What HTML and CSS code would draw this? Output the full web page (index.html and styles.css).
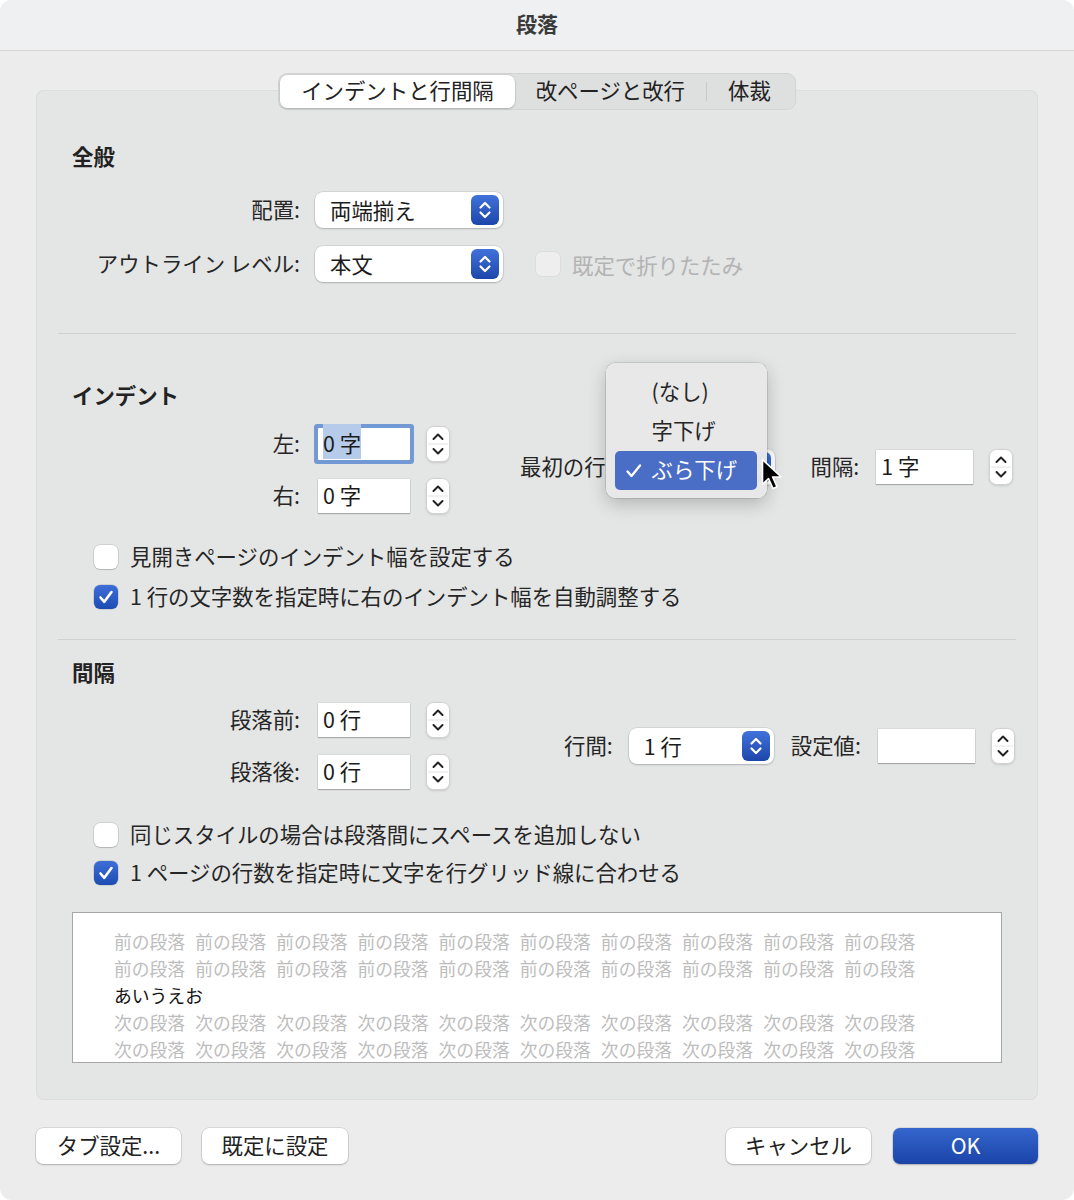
FILE: index.html
```html
<!DOCTYPE html>
<html lang="ja">
<head>
  <meta charset="UTF-8" />
  <title>段落</title>
  <link rel="stylesheet" href="styles.css">
</head>
<body>
<div class="window">
  <header class="titlebar">段落</header>

  <main class="content">
    <nav class="tabs">
      <span class="tab active">インデントと行間隔</span>
      <span class="tab">改ページと改行</span>
      <span class="tab divided">体裁</span>
    </nav>

    <section class="panel">
      <!-- 全般 -->
      <h2>全般</h2>
      <div class="general-grid">
        <span class="lbl">配置:</span>
        <div class="popup">両端揃え<span class="popup-arrows"><svg width="28" height="30" viewBox="0 0 28 30"><path d="M9.5 12.5l4.5-4.5 4.5 4.5M9.5 17.5l4.5 4.5 4.5-4.5" stroke="#fff" stroke-width="2.2" fill="none" stroke-linecap="round" stroke-linejoin="round"/></svg></span></div>
        <span></span>

        <span class="lbl">アウトライン レベル:</span>
        <div class="popup">本文<span class="popup-arrows"><svg width="28" height="30" viewBox="0 0 28 30"><path d="M9.5 12.5l4.5-4.5 4.5 4.5M9.5 17.5l4.5 4.5 4.5-4.5" stroke="#fff" stroke-width="2.2" fill="none" stroke-linecap="round" stroke-linejoin="round"/></svg></span></div>
        <label class="check-inline disabled"><span class="box"></span>既定で折りたたみ</label>
      </div>

      <div class="rule rule-1"></div>

      <!-- インデント -->
      <h2 class="indent-head">インデント</h2>
      <div class="field-block">
        <div class="field-grid">
          <span class="lbl">左:</span>
          <div class="field focused"><span class="sel">0 字</span></div>
          <svg class="stepper" width="24" height="36" viewBox="0 0 24 36"><rect x=".5" y=".5" width="23" height="35" rx="7" fill="#fff" stroke="#d0d0d0"/><path d="M2 18h20" stroke="#e4e4e4"/><path d="M7.5 13l4.5-4.5 4.5 4.5M7.5 23l4.5 4.5 4.5-4.5" stroke="#222" stroke-width="2" fill="none" stroke-linecap="round" stroke-linejoin="round"/></svg>

          <span class="lbl">右:</span>
          <div class="field">0 字</div>
          <svg class="stepper" width="24" height="36" viewBox="0 0 24 36"><rect x=".5" y=".5" width="23" height="35" rx="7" fill="#fff" stroke="#d0d0d0"/><path d="M2 18h20" stroke="#e4e4e4"/><path d="M7.5 13l4.5-4.5 4.5 4.5M7.5 23l4.5 4.5 4.5-4.5" stroke="#222" stroke-width="2" fill="none" stroke-linecap="round" stroke-linejoin="round"/></svg>
        </div>

        <div class="side-group first-line">
          <span class="side-lbl">最初の行</span>
          <div class="popup-wrap">
            <!-- the open menu covers the popup's label -->
            <div class="popup popup-first"><span class="popup-arrows"><svg width="28" height="30" viewBox="0 0 28 30"><path d="M9.5 12.5l4.5-4.5 4.5 4.5M9.5 17.5l4.5 4.5 4.5-4.5" stroke="#fff" stroke-width="2.2" fill="none" stroke-linecap="round" stroke-linejoin="round"/></svg></span></div>
            <ul class="menu">
              <li>(なし)</li>
              <li>字下げ</li>
              <li class="current"><svg class="tick" width="18" height="18" viewBox="0 0 18 18"><path d="M2.5 9.5l4 4.5L15 3.5" stroke="#fff" stroke-width="2.3" fill="none" stroke-linecap="round" stroke-linejoin="round"/></svg>ぶら下げ</li>
            </ul>
            <svg class="cursor" width="22" height="34" viewBox="0 0 22 34"><path d="M1.5 1.5v25l6-6 4.5 10 4-1.8-4.4-9.7h8.6z" fill="#000" stroke="#fff" stroke-width="1.6" stroke-linejoin="round"/></svg>
          </div>
          <span class="side-lbl gap-lbl">間隔:</span>
          <div class="field wide">1 字</div>
          <svg class="stepper" width="24" height="36" viewBox="0 0 24 36"><rect x=".5" y=".5" width="23" height="35" rx="7" fill="#fff" stroke="#d0d0d0"/><path d="M2 18h20" stroke="#e4e4e4"/><path d="M7.5 13l4.5-4.5 4.5 4.5M7.5 23l4.5 4.5 4.5-4.5" stroke="#222" stroke-width="2" fill="none" stroke-linecap="round" stroke-linejoin="round"/></svg>
        </div>
      </div>

      <label class="check-row cr-1"><span class="box"></span>見開きページのインデント幅を設定する</label>
      <label class="check-row cr-2"><span class="box checked"><svg width="24" height="24" viewBox="0 0 24 24"><path d="M6.5 12.5l3.8 4.3L17.5 7" stroke="#fff" stroke-width="2.6" fill="none" stroke-linecap="round" stroke-linejoin="round"/></svg></span>1 行の文字数を指定時に右のインデント幅を自動調整する</label>

      <div class="rule rule-2"></div>

      <!-- 間隔 -->
      <h2 class="spacing-head">間隔</h2>
      <div class="field-block spacing-block">
        <div class="field-grid">
          <span class="lbl">段落前:</span>
          <div class="field">0 行</div>
          <svg class="stepper" width="24" height="36" viewBox="0 0 24 36"><rect x=".5" y=".5" width="23" height="35" rx="7" fill="#fff" stroke="#d0d0d0"/><path d="M2 18h20" stroke="#e4e4e4"/><path d="M7.5 13l4.5-4.5 4.5 4.5M7.5 23l4.5 4.5 4.5-4.5" stroke="#222" stroke-width="2" fill="none" stroke-linecap="round" stroke-linejoin="round"/></svg>

          <span class="lbl">段落後:</span>
          <div class="field">0 行</div>
          <svg class="stepper" width="24" height="36" viewBox="0 0 24 36"><rect x=".5" y=".5" width="23" height="35" rx="7" fill="#fff" stroke="#d0d0d0"/><path d="M2 18h20" stroke="#e4e4e4"/><path d="M7.5 13l4.5-4.5 4.5 4.5M7.5 23l4.5 4.5 4.5-4.5" stroke="#222" stroke-width="2" fill="none" stroke-linecap="round" stroke-linejoin="round"/></svg>
        </div>

        <div class="side-group line-spacing">
          <span class="side-lbl">行間:</span>
          <div class="popup popup-line">1 行<span class="popup-arrows"><svg width="28" height="30" viewBox="0 0 28 30"><path d="M9.5 12.5l4.5-4.5 4.5 4.5M9.5 17.5l4.5 4.5 4.5-4.5" stroke="#fff" stroke-width="2.2" fill="none" stroke-linecap="round" stroke-linejoin="round"/></svg></span></div>
          <span class="side-lbl gap-lbl">設定値:</span>
          <div class="field wide"></div>
          <svg class="stepper" width="24" height="36" viewBox="0 0 24 36"><rect x=".5" y=".5" width="23" height="35" rx="7" fill="#fff" stroke="#d0d0d0"/><path d="M2 18h20" stroke="#e4e4e4"/><path d="M7.5 13l4.5-4.5 4.5 4.5M7.5 23l4.5 4.5 4.5-4.5" stroke="#222" stroke-width="2" fill="none" stroke-linecap="round" stroke-linejoin="round"/></svg>
        </div>
      </div>

      <label class="check-row cr-3"><span class="box"></span>同じスタイルの場合は段落間にスペースを追加しない</label>
      <label class="check-row cr-4"><span class="box checked"><svg width="24" height="24" viewBox="0 0 24 24"><path d="M6.5 12.5l3.8 4.3L17.5 7" stroke="#fff" stroke-width="2.6" fill="none" stroke-linecap="round" stroke-linejoin="round"/></svg></span>1 ページの行数を指定時に文字を行グリッド線に合わせる</label>

      <div class="preview">
        <div class="pline"><span>前の段落</span><span>前の段落</span><span>前の段落</span><span>前の段落</span><span>前の段落</span><span>前の段落</span><span>前の段落</span><span>前の段落</span><span>前の段落</span><span>前の段落</span></div>
        <div class="pline"><span>前の段落</span><span>前の段落</span><span>前の段落</span><span>前の段落</span><span>前の段落</span><span>前の段落</span><span>前の段落</span><span>前の段落</span><span>前の段落</span><span>前の段落</span></div>
        <div class="pline sample">あいうえお</div>
        <div class="pline"><span>次の段落</span><span>次の段落</span><span>次の段落</span><span>次の段落</span><span>次の段落</span><span>次の段落</span><span>次の段落</span><span>次の段落</span><span>次の段落</span><span>次の段落</span></div>
        <div class="pline"><span>次の段落</span><span>次の段落</span><span>次の段落</span><span>次の段落</span><span>次の段落</span><span>次の段落</span><span>次の段落</span><span>次の段落</span><span>次の段落</span><span>次の段落</span></div>
      </div>
    </section>

    <footer class="buttons">
      <button class="btn">タブ設定...</button>
      <button class="btn b-default">既定に設定</button>
      <span class="spacer"></span>
      <button class="btn">キャンセル</button>
      <button class="btn primary">OK</button>
    </footer>
  </main>
</div>
</body>
</html>
```

FILE: styles.css
```css
* {
  box-sizing: border-box;
}

body {
  margin: 0;
  background: #fff;
  font-family: "Noto Sans CJK JP", "Noto Sans", sans-serif;
  font-size: 21.4px;
  color: #262626;
}

.window {
  width: 1074px;
  height: 1200px;
  background: #ececec;
  border-radius: 12px;
  overflow: hidden;
}

.titlebar {
  height: 51px;
  border-bottom: 1px solid #d4d4d4;
  background: #eef0f1;
  text-align: center;
  font-size: 21px;
  font-weight: bold;
  line-height: 46px;
  color: #3a3a3a;
}

.content {
  padding-top: 22px;
}

/* tabs */
.tabs {
  display: flex;
  width: max-content;
  height: 37px;
  margin: 0 auto -20px;
  padding: 2px;
  position: relative;
  z-index: 1;
  background: #dedfdf;
  border-radius: 9px;
  box-shadow: inset 0 0 0 1px rgba(0,0,0,0.05);
}

.tab {
  padding: 0 21px 3px;
  line-height: 30px;
  color: #222;
}

.tab.active {
  background: #fff;
  border-radius: 7px;
  box-shadow: 0 0 0 0.5px rgba(0,0,0,0.12), 0 1px 2px rgba(0,0,0,0.16);
}

.tab.divided {
  border-left: 1px solid #c9c9c9;
  margin: 7px 0;
  padding: 0 23px 0 21px;
  line-height: 16px;
}

/* panel */
.panel {
  margin: 0 36px;
  height: 1010px;
  padding: 53px 36px 0;
  background: #e4e5e5;
  border-radius: 8px;
  box-shadow: inset 0 0 0 1px #dcdddd;
}

h2 {
  margin: 0;
  font-size: 21.4px;
  line-height: 26px;
  padding-bottom: 2px;
  font-weight: bold;
  color: #222;
}

.lbl,
.side-lbl {
  text-align: right;
  white-space: nowrap;
  padding-bottom: 3px;
}

.general-grid {
  display: grid;
  grid-template-columns: 228px 188px auto;
  column-gap: 15px;
  row-gap: 18px;
  align-items: center;
  margin-top: 21px;
}

.popup {
  height: 36px;
  display: flex;
  flex: none;
  align-items: center;
  justify-content: space-between;
  padding: 0 4px 0 15px;
  background: #fff;
  border-radius: 8px;
  color: #1c1c1c;
  line-height: 32px;
  white-space: nowrap;
  box-shadow: 0 0 0 0.5px rgba(0,0,0,0.14), 0 1px 2px rgba(0,0,0,0.18);
}

.popup-arrows {
  display: flex;
  width: 28px;
  height: 30px;
  border-radius: 6px;
  background: linear-gradient(#4173da, #1d46aa);
}

.popup-first {
  justify-content: flex-end;
}

.check-inline {
  display: flex;
  align-items: center;
  gap: 12px;
  margin-left: 18px;
  white-space: nowrap;
}

.check-inline.disabled {
  color: #b3b3b3;
}

.check-inline.disabled .box {
  background: #eeeeee;
  box-shadow: 0 0 0 1px #dcdcdc;
}

.box {
  display: inline-flex;
  width: 24px;
  height: 24px;
  border-radius: 6px;
  background: #fff;
  box-shadow: 0 0 0 0.5px rgba(0,0,0,0.18), 0 1px 1px rgba(0,0,0,0.14);
  flex: none;
}

.box.checked {
  background: linear-gradient(#3d6ed8, #1d4cb2);
  box-shadow: 0 0 0 0.5px rgba(0,0,0,0.2);
}

.rule {
  height: 1px;
  background: #d0d0d0;
  margin: 0 -14px;
}

.rule-1 {
  margin-top: 51px;
}

.indent-head {
  margin-top: 48px;
}

/* field rows */
.field-block {
  display: flex;
  align-items: center;
  margin-top: 16px;
}

.field-grid {
  display: grid;
  grid-template-columns: 228px 94px 24px;
  column-gap: 16px;
  row-gap: 16px;
  align-items: center;
  flex: none;
}

.field {
  flex: none;
  width: 92px;
  height: 34px;
  margin-left: 2px;
  padding-left: 5px;
  line-height: 31px;
  background: #fff;
  color: #1a1a1a;
  white-space: nowrap;
  box-shadow: 0 0 0 0.5px rgba(0,0,0,0.1), 0 1px 1px rgba(0,0,0,0.22);
}

.field.focused {
  height: 32px;
  line-height: 30px;
  border-radius: 1px;
  box-shadow: 0 0 0 4px #7399d5;
}

.field .sel {
  background: #b6caea;
  padding: 3px 0 1px;
}

.field.wide {
  width: 97px;
  margin-left: 17px;
}

.stepper {
  display: block;
  flex: none;
  filter: drop-shadow(0 1px 1px rgba(0,0,0,0.12));
}

.side-group {
  display: flex;
  align-items: center;
  flex: none;
}

.side-group .stepper {
  margin-left: 16px;
}

.side-group .gap-lbl {
  margin-left: 36px;
}

.first-line {
  margin-left: 70px;
  margin-bottom: 6px;
}

.popup-wrap {
  position: relative;
  margin-left: 6px;
  flex: none;
}

.popup-first {
  width: 163px;
}

.menu {
  position: absolute;
  left: -6px;
  top: -86px;
  width: 161px;
  margin: 0;
  padding: 10px 10px 8px 9px;
  list-style: none;
  background: rgba(232,232,232,0.98);
  border-radius: 9px;
  box-shadow: 0 0 0 0.5px rgba(0,0,0,0.2), 0 6px 18px rgba(0,0,0,0.22);
}

.menu li {
  height: 39px;
  line-height: 36px;
  padding-left: 37px;
  border-radius: 5px;
  position: relative;
  color: #262626;
  white-space: nowrap;
}

.menu li.current {
  background: #4a6dc6;
  color: #fff;
}

.menu .tick {
  position: absolute;
  left: 10px;
  top: 11px;
}

.cursor {
  position: absolute;
  left: 149px;
  top: 9px;
}

.check-row {
  display: flex;
  align-items: center;
  gap: 12px;
  height: 28px;
  margin-left: 22px;
  line-height: 25px;
  white-space: nowrap;
}

.check-row .box {
  margin-top: 3px;
}

.cr-1 {
  margin-top: 27px;
}

.cr-2 {
  margin-top: 12px;
}

.rule-2 {
  margin-top: 30px;
}

.spacing-head {
  margin-top: 19px;
}

.spacing-block {
  margin-top: 15px;
}

.line-spacing {
  margin-left: 114px;
}

.popup-line {
  width: 145px;
  margin-left: 16px;
}

.line-spacing .gap-lbl {
  margin-left: 17px;
}

.cr-3 {
  margin-top: 29px;
}

.cr-4 {
  margin-top: 10px;
}

/* preview */
.preview {
  margin-top: 27px;
  height: 151px;
  padding: 15px 0 0 41px;
  background: #fff;
  border: 1px solid #a7a7a7;
  overflow: hidden;
  font-size: 17.8px;
  line-height: 27px;
}

.pline {
  display: flex;
  gap: 10px;
  white-space: nowrap;
  color: #bdbdbd;
}

.pline.sample {
  color: #111;
}

/* bottom buttons */
.buttons {
  display: flex;
  gap: 21px;
  padding: 28px 36px 0;
}

.spacer {
  flex: 1;
}

.btn {
  width: 145px;
  height: 36px;
  border: none;
  border-radius: 7px;
  background: #fff;
  font-family: inherit;
  font-size: 21.4px;
  color: #222;
  padding: 0 0 3px;
  box-shadow: 0 0 0 0.5px rgba(0,0,0,0.16), 0 1px 2px rgba(0,0,0,0.2);
}

.b-default {
  width: 146px;
}

.btn.primary {
  margin-left: 1px;
  background: linear-gradient(#3466cb, #1b44a9);
  color: #fff;
}
```
